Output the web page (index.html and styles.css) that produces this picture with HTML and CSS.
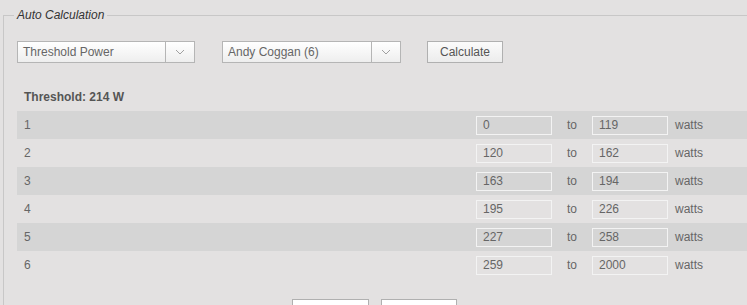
FILE: index.html
```html
<!DOCTYPE html>
<html lang="en">
<head>
    <meta charset="UTF-8">
    <meta name="viewport" content="width=device-width, initial-scale=1.0">
    <title>Auto Calculation</title>
    <link rel="stylesheet" href="styles.css">
</head>
<body>
    <fieldset class="panel">
        <legend>Auto Calculation</legend>

        <div class="controls">
            <div class="select type">
                <span class="select-text">Threshold Power</span>
                <span class="select-arrow">
                    <svg width="10" height="6" viewBox="0 0 10 6"><path d="M1 1 L5 5 L9 1" fill="none" stroke="#a0a0a0" stroke-width="1"/></svg>
                </span>
            </div>
            <div class="select model">
                <span class="select-text">Andy Coggan (6)</span>
                <span class="select-arrow">
                    <svg width="10" height="6" viewBox="0 0 10 6"><path d="M1 1 L5 5 L9 1" fill="none" stroke="#a0a0a0" stroke-width="1"/></svg>
                </span>
            </div>
            <button class="btn" type="button">Calculate</button>
        </div>

        <div class="threshold">Threshold: 214 W</div>

        <div class="zones">
            <div class="zone shaded">
                <span class="zone-name">1</span>
                <input class="field" type="text" value="0">
                <span class="to">to</span>
                <input class="field" type="text" value="119">
                <span class="unit">watts</span>
            </div>
            <div class="zone">
                <span class="zone-name">2</span>
                <input class="field" type="text" value="120">
                <span class="to">to</span>
                <input class="field" type="text" value="162">
                <span class="unit">watts</span>
            </div>
            <div class="zone shaded">
                <span class="zone-name">3</span>
                <input class="field" type="text" value="163">
                <span class="to">to</span>
                <input class="field" type="text" value="194">
                <span class="unit">watts</span>
            </div>
            <div class="zone">
                <span class="zone-name">4</span>
                <input class="field" type="text" value="195">
                <span class="to">to</span>
                <input class="field" type="text" value="226">
                <span class="unit">watts</span>
            </div>
            <div class="zone shaded">
                <span class="zone-name">5</span>
                <input class="field" type="text" value="227">
                <span class="to">to</span>
                <input class="field" type="text" value="258">
                <span class="unit">watts</span>
            </div>
            <div class="zone">
                <span class="zone-name">6</span>
                <input class="field" type="text" value="259">
                <span class="to">to</span>
                <input class="field" type="text" value="2000">
                <span class="unit">watts</span>
            </div>
        </div>

        <div class="actions">
            <button class="btn white ok" type="button"></button>
            <button class="btn white" type="button"></button>
        </div>
    </fieldset>
</body>
</html>
```

FILE: styles.css
```css
body {
    font-family: "Liberation Sans", Arial, sans-serif;
    font-size: 12px;
    background-color: #e3e1e1;
    color: #666;
    margin: 0;
    padding: 0;
    overflow: hidden;
    height: 305px;
}

.panel {
    margin: 8px 0 0 3px;
    padding: 19px 0 20px 13px;
    width: 770px;
    box-sizing: border-box;
    border: 1px solid #c8c7c7;
    border-right: none;
    border-bottom: none;
    min-width: 0;
}

.panel legend {
    font-style: italic;
    color: #333;
    line-height: 14px;
    padding: 0 3px;
    margin-left: -3px;
}

.controls {
    display: flex;
    align-items: center;
}

.select {
    display: flex;
    height: 22px;
    box-sizing: border-box;
    border: 1px solid #b5b5b5;
    background: linear-gradient(#ffffff, #eeeeee);
}

.select.type {
    width: 178px;
    margin-right: 27px;
}

.select.model {
    width: 179px;
    margin-right: 26px;
}

.select-text {
    flex: 1;
    line-height: 20px;
    padding-left: 5px;
    color: #666;
}

.select-arrow {
    width: 28px;
    border-left: 1px solid #b5b5b5;
    display: flex;
    align-items: center;
    justify-content: center;
}

.btn {
    font-family: "Liberation Sans", Arial, sans-serif;
    font-size: 12px;
    color: #555;
    height: 22px;
    width: 76px;
    padding: 0;
    border: 1px solid #b0b0b0;
    background: linear-gradient(#fbfbfb, #ececec);
    border-radius: 0;
}

.threshold {
    margin-top: 27px;
    padding-left: 7px;
    line-height: 14px;
    font-weight: bold;
    color: #555;
}

.zones {
    margin-top: 7px;
}

.zone {
    display: flex;
    align-items: center;
    height: 28px;
}

.zone.shaded {
    background-color: #d5d5d5;
}

.zone-name {
    flex: 0 0 452px;
    padding-left: 7px;
}

.field {
    width: 76px;
    height: 19px;
    box-sizing: border-box;
    border: 1px solid #f3f3f3;
    background: transparent;
    padding: 0 0 0 6px;
    font-family: "Liberation Sans", Arial, sans-serif;
    font-size: 12px;
    color: #666;
    outline: none;
}

.to {
    width: 25px;
    padding-left: 15px;
}

.unit {
    padding-left: 7px;
}

.actions {
    display: flex;
    justify-content: center;
    gap: 12px;
    width: 715px;
    margin-top: 20px;
}

.btn.white {
    background: #ffffff;
}

.btn.white.ok {
    width: 77px;
}
```
